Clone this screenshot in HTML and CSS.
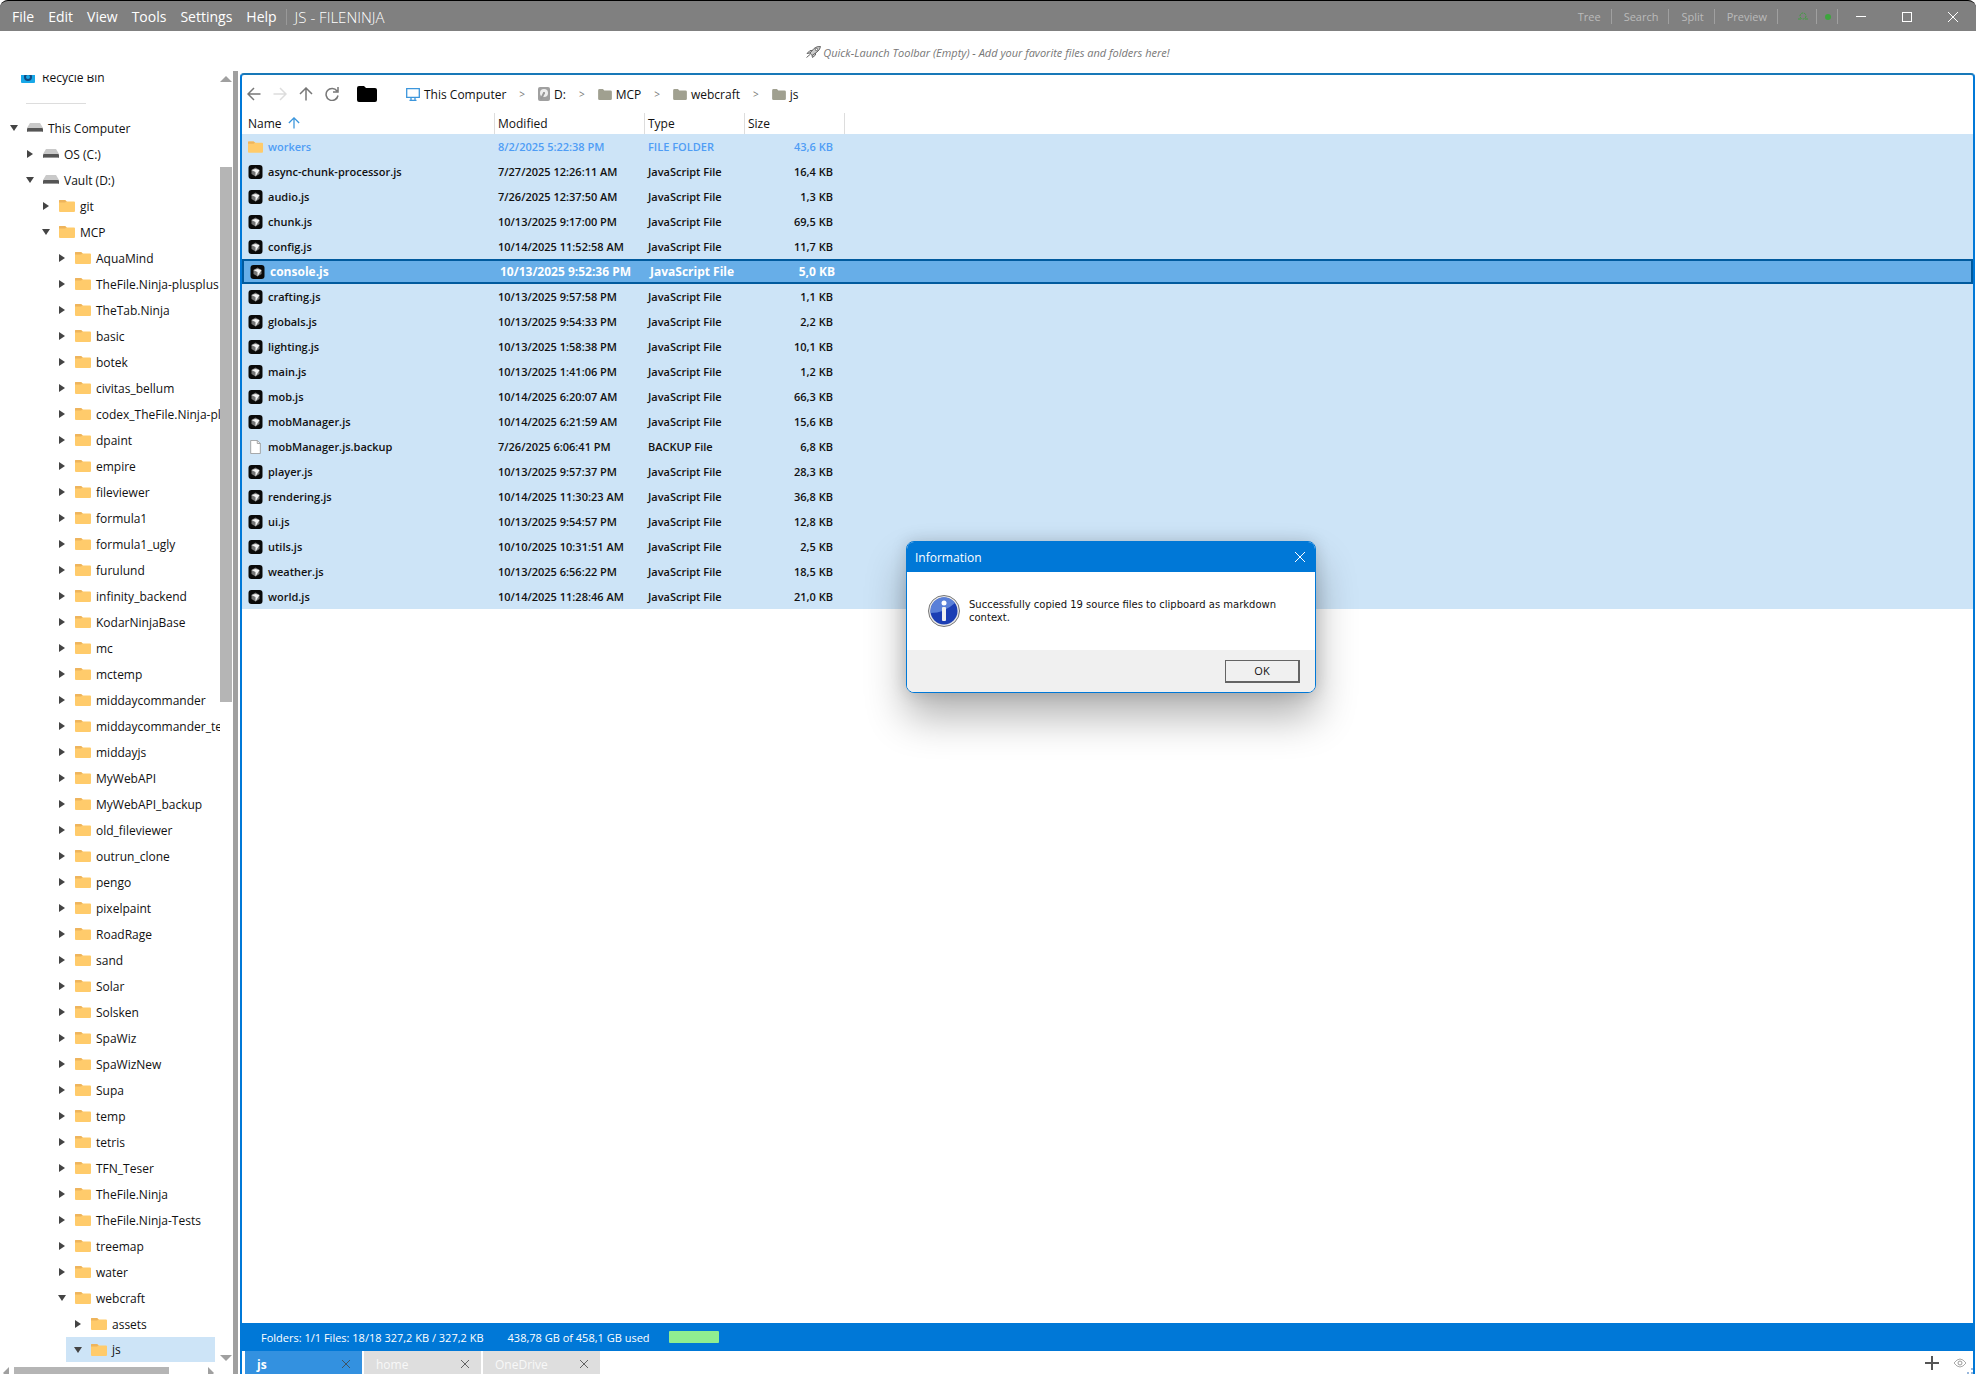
FILE: index.html
```html
<!DOCTYPE html>
<html lang="en">
<head>
  <meta charset="utf-8">
  <title>JS - FILENINJA</title>
  <link rel="stylesheet" href="styles.css">
</head>
<body>
  <svg class="sprite" aria-hidden="true">
    <symbol id="folder" viewBox="0 0 16 14">
      <path d="M0 2V1.500Q0 1 1 1H6L8 2.500H15Q16 2.500 16 3.500V12Q16 13 15 13H1Q0 13 0 12Z" fill="#ffcb6b"/>
      <path d="M0 1.500Q0 1 1 1H6L7.500 2.500 6 3.500H0Z" fill="#eeb45c"/>
    </symbol>
    <symbol id="plain-folder" viewBox="0 0 20 16">
      <path d="M0 2Q0 0 2 0H7L9 2H18Q20 2 20 4V14Q20 16 18 16H2Q0 16 0 14Z" fill="currentColor"/>
    </symbol>
    <symbol id="drive" viewBox="0 0 16 10">
      <path d="M3 0H13L16 5H0Z" fill="#c9c9c9"/>
      <rect y="5" width="16" height="4" rx="1" fill="#555"/>
      <rect x="1" y="8" width="14" height="1" fill="#999"/>
    </symbol>
    <symbol id="script-file" viewBox="0 0 14 14">
      <rect width="14" height="14" rx="3" fill="#0a0a0a"/>
      <path d="M7 2.500L11 5V9L7 11.500 3 9V5Z" fill="#777"/>
      <path d="M3 5L7 4 11 5L7 11.500V7Z" fill="#f4f4f4"/>
    </symbol>
    <symbol id="blank-file" viewBox="0 0 14 16">
      <path d="M1.500 .5H9L12.500 4V15.500H1.500Z" fill="#fff" stroke="#999"/>
      <path d="M9 .5V4H12.500" fill="none" stroke="#999"/>
    </symbol>
    <symbol id="arrow" viewBox="0 0 14 14">
      <path d="M13.500 7H1M7 1L1 7L7 13" fill="none" stroke="currentColor" stroke-width="1.500"/>
    </symbol>
    <symbol id="close" viewBox="0 0 10 10">
      <path d="M0 0L10 10M10 0L0 10" fill="none" stroke="currentColor"/>
    </symbol>
  </svg>

  <header class="titlebar">
    <nav class="menu">
      <button>File</button>
      <button>Edit</button>
      <button>View</button>
      <button>Tools</button>
      <button>Settings</button>
      <button>Help</button>
    </nav>
    <h1 class="title">JS - FILENINJA</h1>
    <div class="toggles">
      <button>Tree</button>
      <button>Search</button>
      <button>Split</button>
      <button>Preview</button>
      <button class="led" aria-label="Updates"><svg width="10" height="10"><circle cx="5" cy="4" r="3" fill="none" stroke="#3f9f3f" stroke-dasharray="2 1"/><path d="M0 7H3M7 7H10" stroke="#3f9f3f"/></svg></button>
      <button class="dot" aria-label="Status"><svg width="8" height="8"><circle cx="4" cy="4" r="3" fill="#3da53d"/></svg></button>
    </div>
    <div class="window-buttons">
      <button aria-label="Minimize"><svg width="10" height="10"><path d="M0 4.500H10" stroke="#fff"/></svg></button>
      <button aria-label="Maximize"><svg width="10" height="10"><rect x=".5" y=".5" width="9" height="9" fill="none" stroke="#fff"/></svg></button>
      <button aria-label="Close"><svg width="10" height="10"><use href="#close"/></svg></button>
    </div>
  </header>

  <div class="quick-launch">
    <svg width="15" height="12" viewBox="0 0 15 12"><path d="M4 7L8 2.500Q11 0 14.500 .5Q14 4 11 6L6 9.500ZM4 7L1 7.500 4 4.500 6.500 4.500M6 9.500L6.500 11.500 9.500 9V7M4 8.500L.5 11.500" fill="#ccc" stroke="#666"/><circle cx="10.500" cy="3.500" r="1.200" fill="#fff" stroke="#666"/></svg>
    <span>Quick-Launch Toolbar (Empty) - Add your favorite files and folders here!</span>
  </div>

  <div class="workspace">
    <aside class="sidebar">
      <div class="tree-area">
        <div class="tree">
          <a class="recycle" href="#"><svg width="14" height="12"><rect width="14" height="12" rx="1" fill="#18a8e8"/><circle cx="7" cy="6" r="3" fill="none" stroke="#124a80" stroke-width="2"/></svg>Recycle Bin</a>
          <div class="rule"></div>
          <ul class="nodes" id="nodes"></ul>
        </div>
        <div class="scroll-y">
          <svg width="12" height="6"><path d="M0 6L6 0L12 6Z" fill="#a0a0a0"/></svg>
          <div class="track"><div class="thumb"></div></div>
          <svg width="12" height="6"><path d="M0 0L6 6L12 0Z" fill="#a0a0a0"/></svg>
        </div>
      </div>
      <div class="scroll-x">
        <svg width="6" height="12"><path d="M6 0L0 6L6 12Z" fill="#a0a0a0"/></svg>
        <div class="track"><div class="thumb"></div></div>
        <svg width="6" height="12"><path d="M0 0L6 6L0 12Z" fill="#a0a0a0"/></svg>
      </div>
    </aside>
    <div class="splitter"></div>

    <main class="pane">
      <div class="navbar">
        <button aria-label="Back"><svg width="14" height="14"><use href="#arrow"/></svg></button>
        <button class="off" aria-label="Forward"><svg class="flip" width="14" height="14"><use href="#arrow"/></svg></button>
        <button aria-label="Up"><svg class="up" width="14" height="14"><use href="#arrow"/></svg></button>
        <button aria-label="Refresh"><svg width="14" height="14" viewBox="0 0 14 14"><path d="M13 8.500A6 6 0 1 1 12 4M13 0V5H8" fill="none" stroke="currentColor" stroke-width="1.500"/></svg></button>
        <button class="home" aria-label="Folder"><svg width="20" height="16"><use href="#plain-folder"/></svg></button>
        <nav class="crumbs">
          <a href="#"><svg width="14" height="13" viewBox="0 0 14 13"><path d="M.7 .7H13.300V9.300H.7ZM5 9.500V12M9 9.500V12M3.500 12.300H10.500" fill="none" stroke="#3c96dc" stroke-width="1.300"/></svg>This Computer</a>
          <span>&gt;</span>
          <a href="#"><svg class="disk" width="12" height="14"><rect width="12" height="14" rx="2" fill="#a0a0a0"/><circle cx="6" cy="6" r="4" fill="#eee"/><circle cx="6" cy="6" r="1" fill="#888"/><path d="M6 6L3 12" stroke="#999" stroke-width="2"/></svg>D:</a>
          <span>&gt;</span>
          <a href="#"><svg width="14" height="11"><use href="#plain-folder"/></svg>MCP</a>
          <span>&gt;</span>
          <a href="#"><svg width="14" height="11"><use href="#plain-folder"/></svg>webcraft</a>
          <span>&gt;</span>
          <a href="#"><svg width="14" height="11"><use href="#plain-folder"/></svg>js</a>
        </nav>
      </div>

      <table class="files">
        <colgroup><col class="c-name"><col class="c-modified"><col class="c-type"><col class="c-size"><col></colgroup>
        <thead>
          <tr><th>Name <svg class="up" width="12" height="12" viewBox="0 0 14 14"><use href="#arrow"/></svg></th><th>Modified</th><th>Type</th><th>Size</th><th></th></tr>
        </thead>
        <tbody id="files"></tbody>
      </table>

      <footer class="status">
        <span>Folders: 1/1 Files: 18/18 327,2 KB / 327,2 KB</span>
        <span>438,78 GB of 458,1 GB used</span>
        <div class="usage"></div>
      </footer>

      <div class="tabs">
        <div class="tab active"><button>js</button><button class="x" aria-label="Close js"><svg width="8" height="8" viewBox="0 0 10 10"><use href="#close"/></svg></button></div>
        <div class="tab"><button>home</button><button class="x" aria-label="Close home"><svg width="8" height="8" viewBox="0 0 10 10"><use href="#close"/></svg></button></div>
        <div class="tab"><button>OneDrive</button><button class="x" aria-label="Close OneDrive"><svg width="8" height="8" viewBox="0 0 10 10"><use href="#close"/></svg></button></div>
        <div class="tab-tools">
          <button aria-label="New tab"><svg width="14" height="14"><path d="M7 0V14M0 7H14" stroke="#555" stroke-width="2"/></svg></button>
          <button aria-label="Show hidden"><svg width="14" height="10"><path d="M1 5Q7 -3 13 5Q7 13 1 5Z" fill="none" stroke="#aaa"/><circle cx="7" cy="5" r="2" fill="none" stroke="#999"/></svg></button>
          <svg class="grip" width="6" height="6"><path d="M4 0H6V2H4ZM4 4H6V6H4ZM0 4H2V6H0Z" fill="#9ab8dc"/></svg>
        </div>
      </div>

      <div class="dialog" role="dialog" aria-labelledby="dialog-title">
        <div class="dialog-title"><span id="dialog-title">Information</span><button aria-label="Close"><svg width="10" height="10"><use href="#close"/></svg></button></div>
        <div class="dialog-body">
          <svg width="32" height="32" viewBox="0 0 32 32">
            <circle cx="16" cy="16" r="15.500" fill="#e8e8e8" stroke="#777"/>
            <circle cx="16" cy="16" r="13.500" fill="#1c3fb4"/>
            <path d="M2.500 16A13.500 13.500 0 0 1 27 8Q16 18 2.500 18Z" fill="#5a80d8"/>
            <circle cx="16" cy="8" r="2.500" fill="#fff"/>
            <rect x="14" y="12" width="4" height="14" rx="1" fill="#f0f0f0"/>
          </svg>
          <p>Successfully copied 19 source files to clipboard as markdown context.</p>
        </div>
        <div class="dialog-footer"><button>OK</button></div>
      </div>
    </main>
  </div>

  <script src="script.js"></script>
</body>
</html>
```
FILE: styles.css
```css
* {
  box-sizing: border-box;
}
body {
  margin: 0;
  height: 100vh;
  display: flex;
  flex-direction: column;
  overflow: hidden;
  background: #fff;
  color: #111;
  font-family: "Open Sans", "Noto Sans", sans-serif;
  font-size: 12px;
}
button {
  padding: 0;
  border: 0;
  background: none;
  color: inherit;
  font: inherit;
}
a {
  color: inherit;
  text-decoration: none;
}
svg {
  display: block;
  flex: none;
}
.sprite {
  position: absolute;
  width: 0;
  height: 0;
}
.up {
  transform: rotate(90deg);
}
.flip {
  transform: scaleX(-1);
}

/* title bar */
.titlebar {
  flex: none;
  display: flex;
  align-items: center;
  height: 31px;
  padding-top: 1px;
  border-top: 1px solid #000;
  border-radius: 8px 8px 0 0;
  background: #808080;
  color: #fff;
}
.menu {
  display: flex;
  gap: 14px;
  padding: 0 9px 0 12px;
  font-size: 14px;
}
.title {
  flex: 1;
  margin: 0;
  padding-left: 8px;
  border-left: 1px solid #999;
  font-size: 15px;
  font-weight: 300;
  line-height: 16px;
}
.toggles {
  display: flex;
  color: #bbb;
  font-size: 11px;
}
.toggles button {
  display: flex;
  align-items: center;
  padding: 0 10px 0 12px;
  border-right: 1px solid #a0a0a0;
  line-height: 15px;
}
.toggles .led {
  padding: 0 8px 0 20px;
}
.toggles .dot {
  padding: 0 5px 0 7px;
}
.window-buttons {
  display: flex;
}
.window-buttons button {
  display: flex;
  justify-content: center;
  width: 46px;
}

.quick-launch {
  flex: none;
  display: flex;
  justify-content: center;
  align-items: center;
  gap: 2px;
  height: 42px;
  color: #777;
  font-size: 11px;
  font-style: italic;
}

.workspace {
  flex: 1;
  display: flex;
  min-height: 0;
}

/* folder tree */
.sidebar {
  display: flex;
  flex-direction: column;
  width: 233px;
}
.tree-area {
  flex: 1;
  display: flex;
  min-height: 0;
}
.tree {
  flex: 1;
  display: flex;
  flex-direction: column;
  margin-top: 2px;
  overflow: hidden;
}
.recycle {
  display: flex;
  align-items: center;
  gap: 7px;
  height: 16px;
  margin-top: -6px;
  padding-left: 21px;
}
.rule {
  height: 1px;
  width: 60px;
  margin: 18px 0 11px 26px;
  background: #ddd;
}
.nodes {
  margin: 0;
  padding: 0;
  list-style: none;
}
.nodes ul {
  margin: 0;
  padding: 0 0 0 16px;
  list-style: none;
}
.node {
  display: flex;
  align-items: center;
  height: 26px;
  padding-left: 9px;
  white-space: nowrap;
}
.node.selected {
  height: 25px;
  margin: 0 5px 0 2px;
  padding-left: 7px;
  background: #cde4f7;
}
.node svg {
  margin-right: 5px;
}
.node .twisty {
  margin-right: 8px;
}
.scroll-y {
  display: flex;
  flex-direction: column;
  width: 13px;
  padding: 3px 0 6px;
}
.scroll-y .track {
  flex: 1;
  margin: 2px 1px 0 0;
  padding-top: 83px;
}
.scroll-y .thumb {
  height: 45%;
  background: #b5b5b5;
}
.scroll-x {
  display: flex;
  height: 7px;
  margin-right: 19px;
  padding: 0 0 0 3px;
  overflow: hidden;
}
.scroll-x .track {
  flex: 1;
  margin: 0 0 0 5px;
}
.scroll-x .thumb {
  width: 80%;
  height: 100%;
  background: #b5b5b5;
}
.splitter {
  width: 5px;
  margin: -2px 2px 0 0;
  background: #a0a0a0;
}

/* file pane */
.pane {
  position: relative;
  flex: 1;
  display: flex;
  flex-direction: column;
  min-width: 0;
  margin-right: 1px;
  border: 2px solid #0078d7;
  border-top-color: #1878b8;
  border-bottom: 0;
  border-radius: 4px 4px 0 0;
}
.navbar {
  display: flex;
  align-items: center;
  gap: 12px;
  height: 38px;
  padding-left: 5px;
  color: #777;
}
.navbar .off {
  color: #ddd;
}
.navbar .home {
  margin-left: 6px;
  color: #000;
}
.crumbs {
  display: flex;
  align-items: center;
  gap: 13px;
  margin-left: 17px;
}
.crumbs a {
  display: flex;
  align-items: center;
  gap: 4px;
  color: #111;
}
.crumbs a svg {
  color: #a0a090;
}
.crumbs span {
  font-size: 10px;
}
.files {
  width: 100%;
  table-layout: fixed;
  border-collapse: separate;
  border-spacing: 0;
}
.c-name {
  width: 253px;
}
.c-modified {
  width: 150px;
}
.c-type,
.c-size {
  width: 100px;
}
.files th {
  height: 21px;
  padding: 0 0 0 3px;
  border-right: 1px solid #ddd;
  font-weight: 500;
  text-align: left;
}
.files th:first-child {
  padding-left: 6px;
}
.files th:last-child {
  border-right: 0;
}
.files th svg {
  display: inline-block;
  margin-left: 3px;
  color: #3c96dc;
  vertical-align: -1px;
}
.files td {
  height: 25px;
  padding: 0 0 0 3px;
  background: #cde4f7;
  font-size: 11px;
  font-weight: 600;
  white-space: nowrap;
}
.files td:first-child {
  padding-left: 6px;
}
.files td:nth-child(4) {
  padding-right: 12px;
  text-align: right;
}
.name {
  display: flex;
  align-items: center;
  gap: 5px;
}
.files .folder td {
  color: #4f9df5;
}
.files .current td {
  padding-left: 5px;
  border-top: 2px solid #005a9e;
  border-bottom: 2px solid #005a9e;
  background: #67aee8;
  color: #fff;
  font-size: 12px;
  font-weight: 700;
}
.files .current td:first-child {
  padding-left: 6px;
  border-left: 2px solid #005a9e;
}
.files .current td:last-child {
  border-right: 2px solid #005a9e;
}
.files .current td:nth-child(4) {
  padding-right: 10px;
}
.status {
  display: flex;
  align-items: center;
  gap: 24px;
  height: 28px;
  margin-top: auto;
  padding-left: 19px;
  background: #0078d7;
  color: #fff;
  font-size: 11px;
}
.usage {
  width: 50px;
  height: 12px;
  margin-left: -5px;
  border-radius: 1px;
  background: #90ee90;
}
.tabs {
  display: flex;
  gap: 2px;
  height: 23px;
  padding-left: 3px;
}
.tab {
  display: flex;
  justify-content: space-between;
  width: 117px;
  padding: 3px 12px 0;
  background: #dedede;
  color: #f8f8f8;
}
.tab.active {
  background: #3391e0;
  color: #fff;
  font-weight: 700;
}
.tab .x {
  color: #444;
}
.tab-tools {
  display: flex;
  align-items: center;
  gap: 14px;
  margin-left: auto;
}
.grip {
  align-self: flex-end;
  margin-left: -14px;
}

/* message box */
.dialog {
  position: absolute;
  top: 466px;
  left: 664px;
  width: 410px;
  border: 1px solid #0078d7;
  border-radius: 8px;
  background: #fff;
  overflow: hidden;
  box-shadow: 0 24px 40px rgba(0, 0, 0, 0.3), 0 0 16px rgba(0, 0, 0, 0.15);
}
.dialog-title {
  display: flex;
  align-items: center;
  justify-content: space-between;
  height: 30px;
  padding: 0 10px 0 8px;
  background: #0078d7;
  color: #fff;
}
.dialog-body {
  display: flex;
  align-items: center;
  gap: 9px;
  height: 78px;
  padding: 0 21px;
}
.dialog-body p {
  margin: 0;
  font-family: "DejaVu Sans", sans-serif;
  font-size: 10px;
  line-height: 13px;
}
.dialog-footer {
  display: flex;
  justify-content: flex-end;
  height: 42px;
  padding: 10px 15px;
  background: #f0f0f0;
}
.dialog-footer button {
  width: 75px;
  height: 23px;
  border: 1px solid #646464;
  border-right-width: 2px;
  border-bottom-width: 2px;
  font-size: 11px;
  line-height: 18px;
}
```
FILE: script.js
```js
const folders = [
  'AquaMind', 'TheFile.Ninja-plusplus', 'TheTab.Ninja', 'basic', 'botek', 'civitas_bellum',
  'codex_TheFile.Ninja-pl', 'dpaint', 'empire', 'fileviewer', 'formula1', 'formula1_ugly',
  'furulund', 'infinity_backend', 'KodarNinjaBase', 'mc', 'mctemp', 'middaycommander',
  'middaycommander_te', 'middayjs', 'MyWebAPI', 'MyWebAPI_backup', 'old_fileviewer',
  'outrun_clone', 'pengo', 'pixelpaint', 'RoadRage', 'sand', 'Solar', 'Solsken', 'SpaWiz',
  'SpaWizNew', 'Supa', 'temp', 'tetris', 'TFN_Teser', 'TheFile.Ninja', 'TheFile.Ninja-Tests',
  'treemap', 'water'
];

const tree = [
  { name: 'This Computer', icon: 'drive', children: [
    { name: 'OS (C:)', icon: 'drive' },
    { name: 'Vault (D:)', icon: 'drive', children: [
      { name: 'git' },
      { name: 'MCP', children: [
        ...folders.map(name => ({ name })),
        { name: 'webcraft', children: [
          { name: 'assets' },
          { name: 'js', selected: true, children: [] }
        ] }
      ] }
    ] }
  ] }
];

const files = [
  ['workers', '8/2/2025 5:22:38 PM', 'FILE FOLDER', '43,6 KB'],
  ['async-chunk-processor.js', '7/27/2025 12:26:11 AM', 'JavaScript File', '16,4 KB'],
  ['audio.js', '7/26/2025 12:37:50 AM', 'JavaScript File', '1,3 KB'],
  ['chunk.js', '10/13/2025 9:17:00 PM', 'JavaScript File', '69,5 KB'],
  ['config.js', '10/14/2025 11:52:58 AM', 'JavaScript File', '11,7 KB'],
  ['console.js', '10/13/2025 9:52:36 PM', 'JavaScript File', '5,0 KB'],
  ['crafting.js', '10/13/2025 9:57:58 PM', 'JavaScript File', '1,1 KB'],
  ['globals.js', '10/13/2025 9:54:33 PM', 'JavaScript File', '2,2 KB'],
  ['lighting.js', '10/13/2025 1:58:38 PM', 'JavaScript File', '10,1 KB'],
  ['main.js', '10/13/2025 1:41:06 PM', 'JavaScript File', '1,2 KB'],
  ['mob.js', '10/14/2025 6:20:07 AM', 'JavaScript File', '66,3 KB'],
  ['mobManager.js', '10/14/2025 6:21:59 AM', 'JavaScript File', '15,6 KB'],
  ['mobManager.js.backup', '7/26/2025 6:06:41 PM', 'BACKUP File', '6,8 KB'],
  ['player.js', '10/13/2025 9:57:37 PM', 'JavaScript File', '28,3 KB'],
  ['rendering.js', '10/14/2025 11:30:23 AM', 'JavaScript File', '36,8 KB'],
  ['ui.js', '10/13/2025 9:54:57 PM', 'JavaScript File', '12,8 KB'],
  ['utils.js', '10/10/2025 10:31:51 AM', 'JavaScript File', '2,5 KB'],
  ['weather.js', '10/13/2025 6:56:22 PM', 'JavaScript File', '18,5 KB'],
  ['world.js', '10/14/2025 11:28:46 AM', 'JavaScript File', '21,0 KB']
];

function renderNode(node) {
  const twisty = node.children ? 'M1 2H9L5 8Z' : 'M2 1L8 5L2 9Z';
  const children = node.children ? '<ul>' + node.children.map(renderNode).join('') + '</ul>' : '';
  return `<li><a href="#" class="node${node.selected ? ' selected' : ''}">
    <svg class="twisty" width="10" height="10"><path d="${twisty}" fill="#444"/></svg>
    <svg width="16" height="14"><use href="#${node.icon || 'folder'}"/></svg>${node.name}</a>${children}</li>`;
}

function renderFile([name, modified, type, size]) {
  let icon = 'script-file';
  let row = '';
  if (type === 'FILE FOLDER') { icon = 'folder'; row = 'folder'; }
  if (type === 'BACKUP File') icon = 'blank-file';
  if (name === 'console.js') row = 'current';
  return `<tr class="${row}"><td><div class="name"><svg width="15" height="14"><use href="#${icon}"/></svg>${name}</div></td>
    <td>${modified}</td><td>${type}</td><td>${size}</td><td></td></tr>`;
}

document.querySelector('#nodes').innerHTML = tree.map(renderNode).join('');
document.querySelector('#files').innerHTML = files.map(renderFile).join('');
```
